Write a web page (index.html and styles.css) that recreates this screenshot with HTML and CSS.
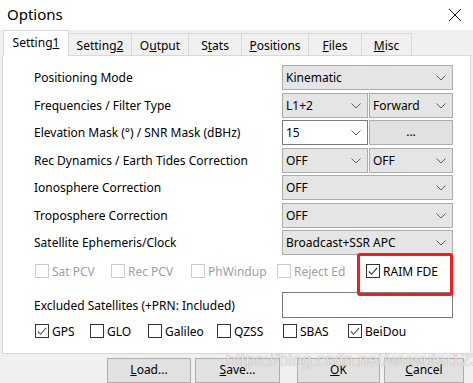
FILE: index.html
```html
<!DOCTYPE html>
<html>
<head>
<meta charset="utf-8">
<link rel="stylesheet" href="styles.css">
</head>
<body>
<div class="window">
  <div class="titlebar">
    <span class="title">Options</span>
    <svg class="close" width="14" height="14" viewBox="0 0 14 14"><path d="M1 1 L13 13 M13 1 L1 13" stroke="#111" stroke-width="1" fill="none"/></svg>
  </div>
  <div class="tabs">
    <div class="tab active t1">Setting<u>1</u></div>
    <div class="tab t2">Setting<u>2</u></div>
    <div class="tab t3">O<u>u</u>tput</div>
    <div class="tab t4">S<u>t</u>ats</div>
    <div class="tab t5"><u>P</u>ositions</div>
    <div class="tab t6"><u>F</u>iles</div>
    <div class="tab t7"><u>M</u>isc</div>
  </div>
  <div class="panel">
    <div class="form">
      <div class="label">Positioning Mode</div>
      <div class="select">Kinematic<svg class="chev" width="10" height="6" viewBox="0 0 10 6"><path d="M0.5 0.5 L5 5 L9.5 0.5" stroke="#606060" fill="none"/></svg></div>

      <div class="label">Frequencies / Filter Type</div>
      <div class="pair">
        <div class="select">L1+2<svg class="chev" width="10" height="6" viewBox="0 0 10 6"><path d="M0.5 0.5 L5 5 L9.5 0.5" stroke="#606060" fill="none"/></svg></div>
        <div class="select">Forward<svg class="chev" width="10" height="6" viewBox="0 0 10 6"><path d="M0.5 0.5 L5 5 L9.5 0.5" stroke="#606060" fill="none"/></svg></div>
      </div>

      <div class="label">Elevation Mask (°) / SNR Mask (dBHz)</div>
      <div class="pair">
        <div class="select edit">15<svg class="chev" width="10" height="6" viewBox="0 0 10 6"><path d="M0.5 0.5 L5 5 L9.5 0.5" stroke="#606060" fill="none"/></svg></div>
        <div class="btn-dots">...</div>
      </div>

      <div class="label">Rec Dynamics / Earth Tides Correction</div>
      <div class="pair">
        <div class="select">OFF<svg class="chev" width="10" height="6" viewBox="0 0 10 6"><path d="M0.5 0.5 L5 5 L9.5 0.5" stroke="#606060" fill="none"/></svg></div>
        <div class="select">OFF<svg class="chev" width="10" height="6" viewBox="0 0 10 6"><path d="M0.5 0.5 L5 5 L9.5 0.5" stroke="#606060" fill="none"/></svg></div>
      </div>

      <div class="label">Ionosphere Correction</div>
      <div class="select">OFF<svg class="chev" width="10" height="6" viewBox="0 0 10 6"><path d="M0.5 0.5 L5 5 L9.5 0.5" stroke="#606060" fill="none"/></svg></div>

      <div class="label">Troposphere Correction</div>
      <div class="select">OFF<svg class="chev" width="10" height="6" viewBox="0 0 10 6"><path d="M0.5 0.5 L5 5 L9.5 0.5" stroke="#606060" fill="none"/></svg></div>

      <div class="label">Satellite Ephemeris/Clock</div>
      <div class="select">Broadcast+SSR APC<svg class="chev" width="10" height="6" viewBox="0 0 10 6"><path d="M0.5 0.5 L5 5 L9.5 0.5" stroke="#606060" fill="none"/></svg></div>
    </div>

    <div class="checks opts">
      <div class="chk dis w1"><span class="box"></span>Sat PCV</div>
      <div class="chk dis w2"><span class="box"></span>Rec PCV</div>
      <div class="chk dis w3"><span class="box"></span>PhWindup</div>
      <div class="chk dis w4"><span class="box"></span>Reject Ed</div>
      <div class="chk raim"><span class="box"><svg width="13" height="13" viewBox="0 0 13 13"><path d="M2 6.5 L5 9.5 L11 2.5" stroke="#333" stroke-width="1.2" fill="none"/></svg></span>RAIM FDE
        <div class="highlight"></div>
      </div>
    </div>

    <div class="excl">
      <div class="label">Excluded Satellites (+PRN: Included)</div>
      <div class="textbox"></div>
    </div>

    <div class="checks navs">
      <div class="chk n1"><span class="box"><svg width="13" height="13" viewBox="0 0 13 13"><path d="M2 6.5 L5 9.5 L11 2.5" stroke="#555" stroke-width="1.2" fill="none"/></svg></span>GPS</div>
      <div class="chk n2"><span class="box"></span>GLO</div>
      <div class="chk n3"><span class="box"></span>Galileo</div>
      <div class="chk n4"><span class="box"></span>QZSS</div>
      <div class="chk n5"><span class="box"></span>SBAS</div>
      <div class="chk"><span class="box"><svg width="13" height="13" viewBox="0 0 13 13"><path d="M2 6.5 L5 9.5 L11 2.5" stroke="#555" stroke-width="1.2" fill="none"/></svg></span>BeiDou</div>
    </div>
  </div>
  <div class="buttons">
    <div class="button b-load"><u>L</u>oad...</div>
    <div class="button b-save"><u>S</u>ave...</div>
    <div class="button b-ok"><u>O</u>K</div>
    <div class="button b-cancel"><u>C</u>ancel</div>
  </div>
  <div class="watermark">https://blog.csdn.net/wuwuku123</div>
</div>
</body>
</html>
```
FILE: styles.css
```css
* { box-sizing: border-box; }
html, body { margin: 0; padding: 0; }
body {
  width: 473px;
  height: 383px;
  overflow: hidden;
  background: #f0f0f0;
  font-family: "Noto Sans", "Open Sans", sans-serif;
  font-size: 12px;
  color: #000;
}
.window { position: relative; width: 473px; height: 383px; }
.titlebar {
  height: 30px;
  background: #fff;
  display: flex;
  align-items: center;
  justify-content: space-between;
  padding: 0 11px 0 7px;
}
.title { font-size: 15px; line-height: 1; margin-top: -2px; }
.close { margin-top: -1px; }

.tabs {
  height: 25px;
  display: flex;
  align-items: flex-end;
  padding-left: 3px;
}
.tab {
  height: 22px;
  border: 1px solid #d9d9d9;
  border-bottom: none;
  border-left: none;
  background: #f0f0f0;
  display: flex;
  align-items: center;
  justify-content: center;
  padding-top: 1px;
}
.tab.active {
  height: 26px;
  background: #fff;
  border-left: 1px solid #d9d9d9;
  margin-bottom: -1px;
  position: relative;
  z-index: 2;
  padding-bottom: 3px;
}
.t1 { width: 66px; }
.t2 { width: 63px; }
.t3 { width: 57px; }
.t4 { width: 53px; }
.t5 { width: 67px; }
.t6 { width: 53px; }
.t7 { width: 50px; }

.panel {
  margin: 0 2px 0 2px;
  height: 299px;
  background: #fff;
  border: 1px solid #d9d9d9;
  padding: 9px 17px 0 31px;
}
.form {
  display: grid;
  grid-template-columns: 1fr 171px;
  grid-auto-rows: 25px;
  row-gap: 2.5px;
}
.label { display: flex; align-items: center; white-space: nowrap; }
.select {
  position: relative;
  background: #e5e5e5;
  border: 1px solid #acacac;
  display: flex;
  align-items: center;
  padding-left: 3px;
  white-space: nowrap;
}
.select.edit { background: #fff; border-color: #7a7a7a; }
.chev { position: absolute; right: 6px; top: 9px; }
.pair {
  display: grid;
  grid-template-columns: 86px 84px;
  column-gap: 1px;
}
.btn-dots {
  background: #e1e1e1;
  border: 1px solid #adadad;
  display: flex;
  align-items: center;
  justify-content: center;
  padding-bottom: 3px;
}

.checks { display: flex; align-items: center; }
.opts { margin-top: 8px; height: 16px; }
.chk {
  display: flex;
  align-items: center;
  white-space: nowrap;
  position: relative;
}
.box {
  width: 14px;
  height: 14px;
  border: 1px solid #333;
  background: #fff;
  margin: 0 3px 0 1px;
  display: inline-flex;
}
.box svg { margin: 0; }
.chk.dis { color: #a0a0a0; }
.chk.dis .box { border-color: #cccccc; }
.w1 { width: 76px; }
.w2 { width: 80px; }
.w3 { width: 86px; }
.w4 { width: 89px; }
.highlight {
  position: absolute;
  left: -8px;
  top: -10px;
  width: 96px;
  height: 43px;
  border: 3px solid #f01e1e;
  border-radius: 3px;
}

.excl {
  display: grid;
  grid-template-columns: 1fr 171px;
  height: 26px;
  margin-top: 13px;
}
.textbox { background: #fff; border: 1px solid #7a7a7a; }
.navs { margin-top: 5px; height: 16px; }
.n1 { width: 55px; }
.n2 { width: 58px; }
.n3 { width: 69px; }
.n4 { width: 66px; }
.n5 { width: 65px; }

.buttons {
  display: flex;
  padding-left: 107px;
  margin-top: 4px;
}
.button {
  height: 25px;
  background: #e1e1e1;
  border: 1px solid #adadad;
  display: flex;
  align-items: center;
  justify-content: center;
  padding-bottom: 2px;
}
.b-load { width: 84px; }
.b-save { width: 85px; margin-left: 4px; }
.b-ok { width: 83px; margin-left: 17px; }
.b-cancel { width: 80px; margin-left: 4px; }

.watermark {
  position: absolute;
  left: 226px;
  top: 350px;
  font-family: "Liberation Sans", sans-serif;
  font-size: 17.5px;
  color: rgba(255, 255, 255, 0.75);
  text-shadow: 0 0 1px rgba(90, 90, 90, 0.6);
  white-space: nowrap;
  pointer-events: none;
}
```
